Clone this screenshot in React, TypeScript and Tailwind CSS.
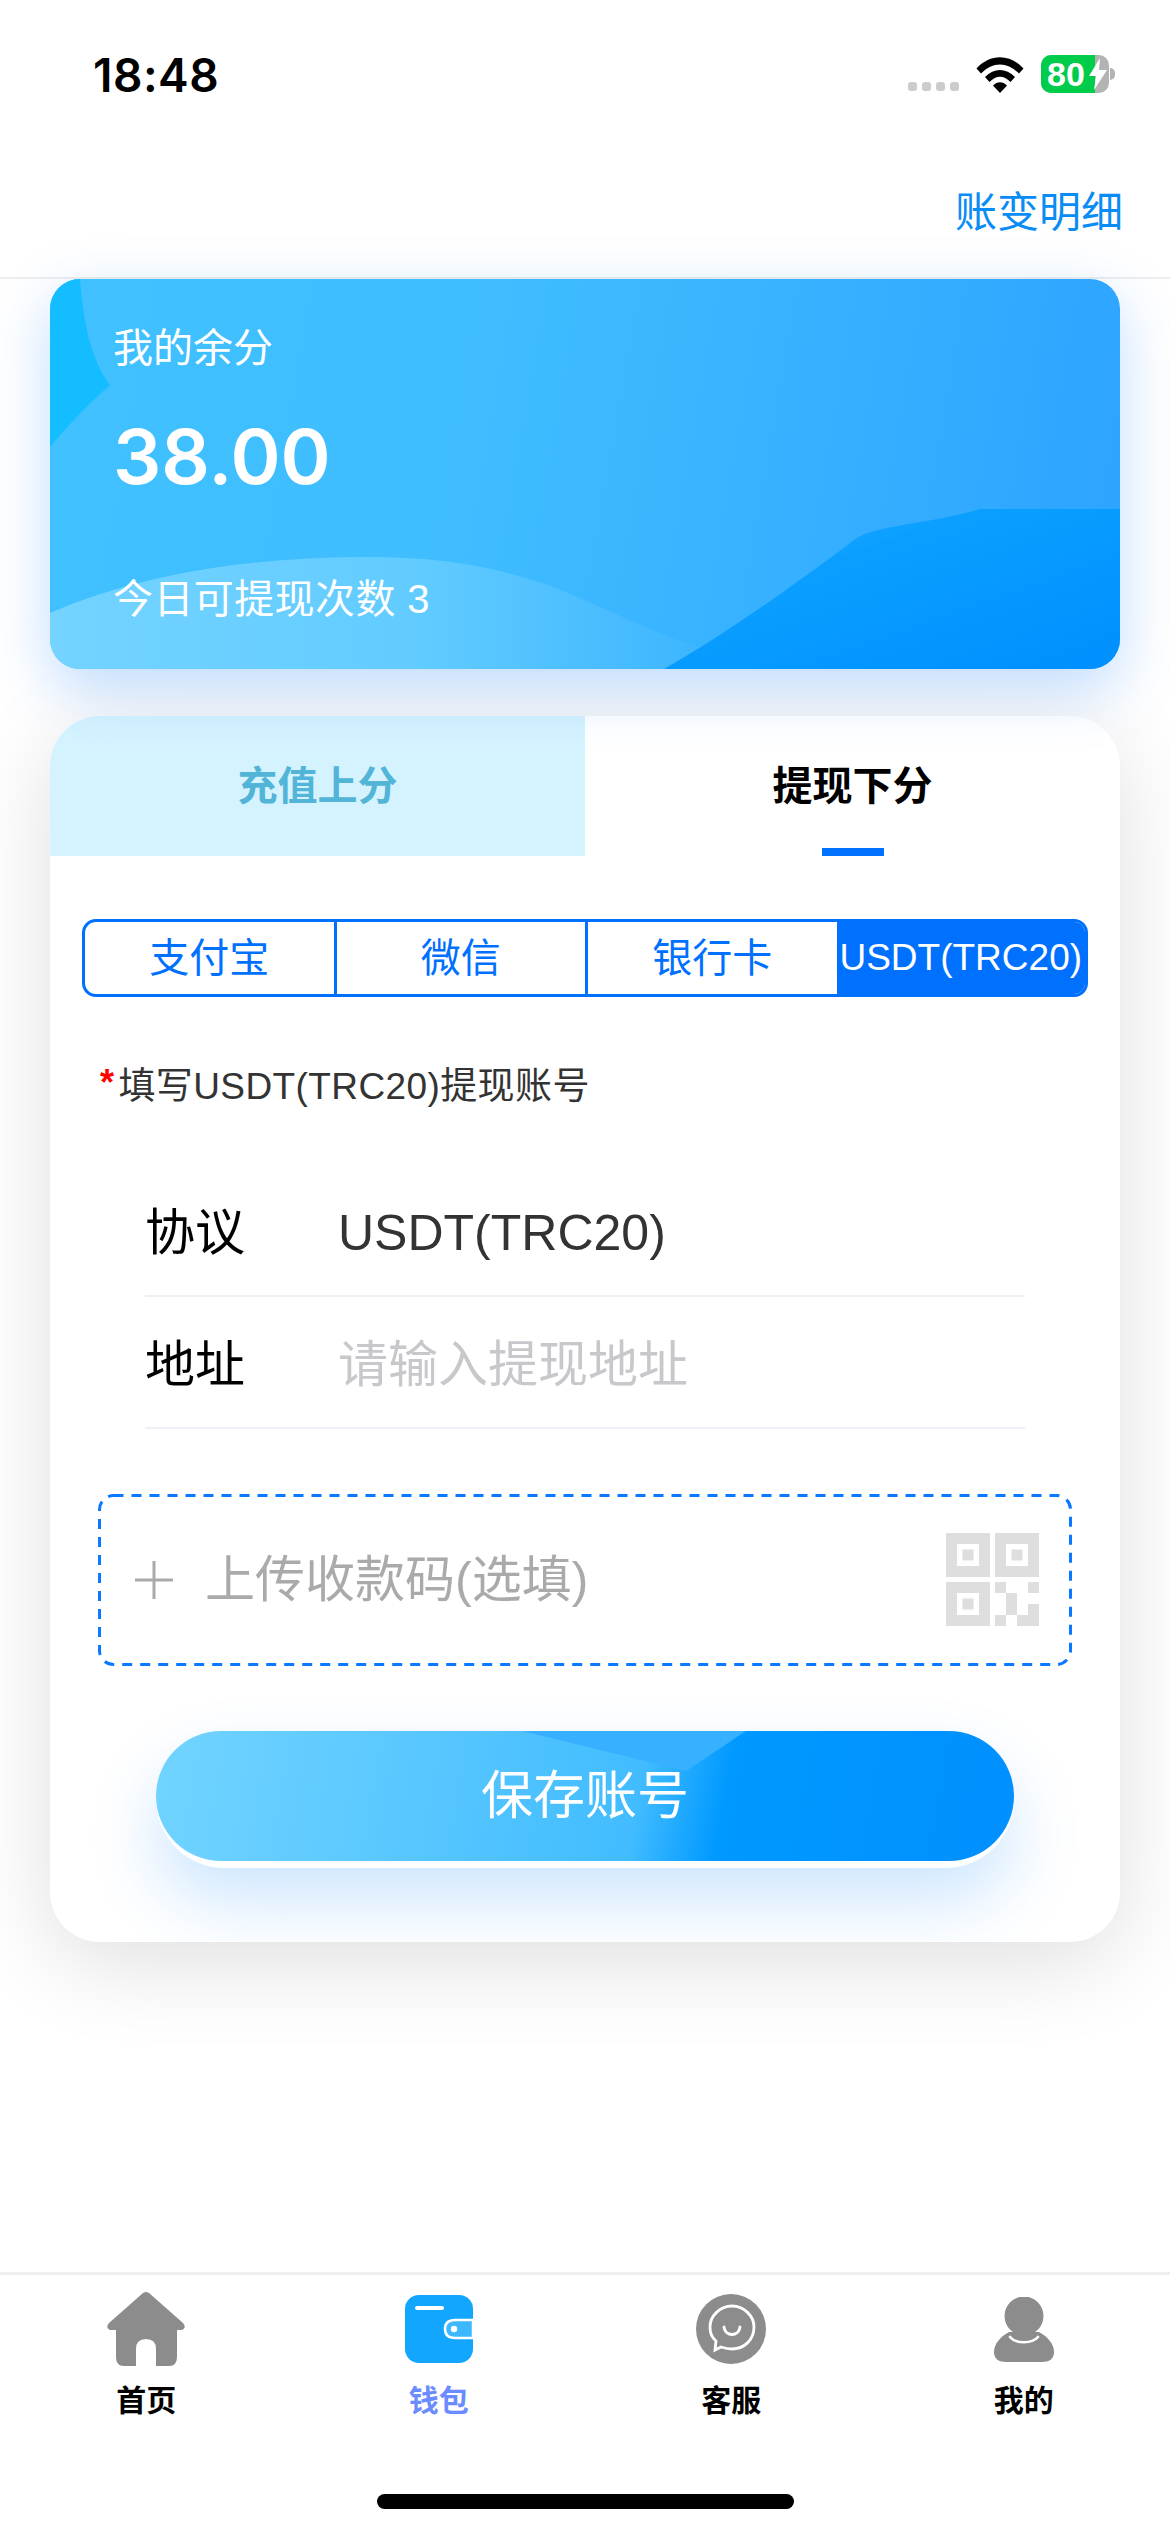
import React from "react";

const Wifi = () => (
  <svg width="48" height="36" viewBox="0 0 48 36" className="block">
    <path d="M0.5 11.5 C14 -3.5 34 -3.5 47.5 11.5 L43 16.5 C31 4.5 17 4.5 5 16.5 Z" fill="#000" />
    <path d="M9 20 C18 10.5 30 10.5 39 20 L34.5 25 C27.5 18 20.5 18 13.5 25 Z" fill="#000" />
    <path d="M17 28.5 C21 24 27 24 31 28.5 L24 36 Z" fill="#000" />
  </svg>
);

const Battery = () => (
  <div className="flex items-center">
    <div className="relative flex h-[38px] w-[68px] overflow-hidden rounded-[10px] bg-[#b3b3b3]">
      <div className="flex w-[54px] items-center bg-[#00cc4c] pl-[6px] text-[34px] leading-none font-bold text-white">80</div>
      <svg width="20" height="32" viewBox="0 0 20 32" className="absolute top-[3px] left-[47px]">
        <path d="M12 0 L1 18 H8 L6 32 L19 12 H11 Z" fill="#fff" />
      </svg>
    </div>
    <div className="ml-[1px] h-[12px] w-[5px] rounded-r-full bg-[#b3b3b3]" />
  </div>
);

const BalanceArt = () => (
  <svg viewBox="0 0 1070 390" preserveAspectRatio="none" className="absolute inset-0 h-full w-full">
    <defs>
      <linearGradient id="balDark" x1="0" y1="0" x2="1" y2="1">
        <stop offset="0" stopColor="#2aaeff" />
        <stop offset="0.35" stopColor="#0a9fff" />
        <stop offset="1" stopColor="#008fff" />
      </linearGradient>
      <linearGradient id="balHill" x1="0" y1="0" x2="1" y2="0">
        <stop offset="0" stopColor="#74d3ff" />
        <stop offset="0.5" stopColor="#62ccff" />
        <stop offset="1" stopColor="#34b0ff" />
      </linearGradient>
    </defs>
    <path d="M0 0 H30 C33 40 40 80 60 106 C35 128 15 150 0 168 Z" fill="#14bdff" />
    <path d="M0 334 C90 295 200 278 316 278 C400 278 450 290 498 306 C560 330 620 365 720 390 H0 Z" fill="url(#balHill)" />
    <path d="M614 390 C650 370 720 325 808 258 C835 245 880 245 930 230 H1070 V390 Z" fill="url(#balDark)" />
  </svg>
);

const ButtonArt = () => (
  <svg viewBox="0 0 858 130" preserveAspectRatio="none" className="absolute inset-0 h-full w-full">
    <path d="M366 0 L530 40 L590 0 Z" fill="#37b1ff" />
  </svg>
);

const Qr = () => (
  <svg width="93" height="94" viewBox="0 0 93 94" className="block" fill="#dedede">
    <path fillRule="evenodd" d="M0 0H44V44H0Z M11 11V33H33V11Z" />
    <rect x="16.5" y="16.5" width="11" height="11" />
    <path fillRule="evenodd" d="M49 0H93V44H49Z M60 11V33H82V11Z" />
    <rect x="65.5" y="16.5" width="11" height="11" />
    <path fillRule="evenodd" d="M0 49H44V93H0Z M11 60V82H33V60Z" />
    <rect x="16.5" y="65.5" width="11" height="11" />
    <rect x="49" y="49" width="11" height="11" />
    <rect x="82" y="49" width="11" height="11" />
    <rect x="60" y="60" width="11" height="22" />
    <rect x="49" y="82" width="11" height="11" />
    <path d="M82 71H93V93H71V82H82Z" />
  </svg>
);

const HomeIcon = () => (
  <svg width="78" height="74" viewBox="0 0 78 74" className="block">
    <path
      fill="#8c8c8c"
      d="M36 1 Q39 -1 42 1 L76 31 Q80 36 75 38 L70 38 V65 Q70 74 62 74 H49 V57 Q49 47 39 47 Q29 47 29 57 V74 H17 Q9 74 9 65 V38 L3 38 Q-2 36 2 31 Z"
    />
  </svg>
);

const WalletIcon = () => (
  <svg width="68" height="68" viewBox="0 0 68 68" className="block">
    <rect width="68" height="68" rx="14" fill="#12a6ff" />
    <rect x="10" y="11" width="29" height="4" rx="2" fill="#fff" />
    <path d="M68 25 H50 Q40 25 40 34 Q40 43 50 43 H68 Z" fill="#3db8ff" stroke="#fff" strokeWidth="2.5" />
    <circle cx="49" cy="34" r="3.2" fill="#fff" />
  </svg>
);

const ServiceIcon = () => (
  <svg width="70" height="70" viewBox="0 0 70 70" className="block">
    <circle cx="35" cy="35" r="35" fill="#8c8c8c" />
    <path
      d="M36 12 C48 12 58 22 58 33 C58 46 48 55 36 55 C32 55 28 54 25 53 L19 56 L20 47 C15 43 14 38 14 33 C14 22 24 12 36 12 Z"
      fill="none"
      stroke="#fff"
      strokeWidth="2.8"
    />
    <path d="M28 33 C29 43 43 43 44 33" fill="none" stroke="#fff" strokeWidth="2.8" strokeLinecap="round" />
  </svg>
);

const MeIcon = () => (
  <svg width="60" height="65" viewBox="0 0 60 65" className="block">
    <circle cx="30" cy="19" r="19.5" fill="#8c8c8c" />
    <path d="M15 35 H45 C54 40 60 47 60 55 C60 62 55 65 48 65 H12 C5 65 0 62 0 55 C0 47 6 40 15 35 Z" fill="#8c8c8c" />
    <path d="M16 40 C22 47 38 47 44 40" fill="none" stroke="#fff" strokeWidth="2.6" strokeLinecap="round" />
  </svg>
);

const NavItem = ({ icon, label, active }: { icon: React.ReactNode; label: string; active?: boolean }) => (
  <div className="flex flex-1 flex-col items-center">
    <div className="flex h-[78px] items-center justify-center">{icon}</div>
    <div className={`mt-[13px] text-[30px] leading-[40px] font-bold ${active ? "text-[#6b8cff]" : "text-black"}`}>{label}</div>
  </div>
);

export default function App() {
  return (
    <div className="flex h-[2532px] w-[1170px] flex-col overflow-hidden bg-white [font-family:'Liberation_Sans','Noto_Sans_CJK_SC',sans-serif]">
      <header className="h-[279px] shrink-0 border-b-[2px] border-[#eeeeee]">
        <div className="flex h-[183px] items-start justify-between pt-[50px] pr-[55px] pl-[93px]">
          <div className="text-[46px] leading-[50px] font-semibold tracking-[0.5px] text-black [font-family:Inter,sans-serif]">18:48</div>
          <div className="flex items-end gap-[17px] pt-[5px]">
            <div className="mb-[2px] flex gap-[5px]">
              {[0, 1, 2, 3].map((i) => (
                <div key={i} className="h-[9px] w-[9px] rounded-[3px] bg-[#cccccc]" />
              ))}
            </div>
            <Wifi />
            <Battery />
          </div>
        </div>
        <div className="flex justify-end pr-[47px] text-[42px] leading-[60px] text-[#0a8cf5]">账变明细</div>
      </header>

      <main className="flex flex-col px-[50px]">
        <section className="relative h-[390px] overflow-hidden rounded-[30px] bg-[linear-gradient(100deg,#41c1ff_0%,#3fbdff_40%,#2da3ff_100%)] shadow-[0_20px_60px_rgba(0,120,255,0.25)]">
          <BalanceArt />
          <div className="relative flex h-full flex-col pl-[63px] text-white">
            <div className="mt-[44px] text-[40px] leading-[50px]">我的余分</div>
            <div className="mt-[38px] text-[76px] leading-[90px] font-semibold [font-family:Inter,sans-serif]">38.00</div>
            <div className="mt-[73px] text-[40px] leading-[50px] tracking-[0.4px]">今日可提现次数 3</div>
          </div>
        </section>

        <section className="mt-[47px] flex h-[1226px] flex-col overflow-hidden rounded-[50px] bg-white shadow-[0_20px_90px_rgba(0,0,0,0.13)]">
          <div className="flex h-[140px] shrink-0">
            <div className="flex flex-1 items-center justify-center bg-[#d5f3ff] text-[40px] font-bold text-[#52b4d6]">充值上分</div>
            <div className="relative flex flex-1 items-center justify-center text-[40px] font-bold text-black">
              提现下分
              <div className="absolute bottom-0 left-[237px] h-[8px] w-[62px] bg-[#0070ff]" />
            </div>
          </div>

          <div className="mx-[32px] mt-[63px] flex h-[78px] overflow-hidden rounded-[14px] border-[3px] border-[#0070ff] text-[40px] text-[#0070ff]">
            <div className="flex flex-1 items-center justify-center border-r-[3px] border-[#0070ff]">支付宝</div>
            <div className="flex flex-1 items-center justify-center border-r-[3px] border-[#0070ff]">微信</div>
            <div className="flex flex-1 items-center justify-center">银行卡</div>
            <div className="flex flex-1 items-center justify-center bg-[#0070ff] text-[37px] whitespace-nowrap text-white">USDT(TRC20)</div>
          </div>

          <div className="mt-[65px] ml-[50px] flex h-[50px] items-center text-[37px] tracking-[0.4px] text-[#333333]">
            <span className="mr-[4px] mb-[8px] text-[36px] leading-none font-bold text-[#ff0000]">*</span>
            <span>填写USDT(TRC20)提现账号</span>
          </div>

          <div className="mx-[95px] mt-[53px] flex flex-col">
            <div className="flex h-[132px] items-center border-b-[2px] border-[#eef0f5] pt-[6px] text-[50px]">
              <span className="w-[193px] text-black">协议</span>
              <span className="text-[#333333]">USDT(TRC20)</span>
            </div>
            <div className="flex h-[132px] items-center border-b-[2px] border-[#eef0f5] pt-[6px] text-[50px]">
              <span className="w-[193px] text-black">地址</span>
              <span className="text-[#c8c8cc]">请输入提现地址</span>
            </div>
          </div>

          <div className="relative mx-[48px] mt-[65px] flex h-[172px] items-center pr-[33px] pl-[37px]">
            <svg className="pointer-events-none absolute inset-0 h-full w-full" fill="none">
              <rect x="1.5" y="1.5" width="971" height="169" rx="14" stroke="#0a78ff" strokeWidth="3" strokeDasharray="10 8" />
            </svg>
            <svg width="38" height="38" viewBox="0 0 38 38" className="shrink-0">
              <path d="M17.5 0h3v17.5H38v3H20.5V38h-3V20.5H0v-3h17.5Z" fill="#aaaaaa" />
            </svg>
            <span className="ml-[32px] flex-1 text-[50px] text-[#aaaaaa]">上传收款码(选填)</span>
            <Qr />
          </div>

          <div className="mx-[106px] mt-[65px] h-[137px] rounded-full bg-white shadow-[0_34px_70px_rgba(0,130,255,0.2)]">
            <div className="relative flex h-[130px] items-center justify-center overflow-hidden rounded-full bg-[linear-gradient(100deg,#72d4ff_0%,#42bcff_56%,#0099ff_66%,#008fff_100%)] text-[52px] text-white">
              <ButtonArt />
              <span className="relative">保存账号</span>
            </div>
          </div>
        </section>
      </main>

      <div className="flex-1" />

      <nav className="h-[260px] shrink-0 border-t-[3px] border-[#eeeeee] pt-[15px]">
        <div className="flex">
          <NavItem icon={<HomeIcon />} label="首页" />
          <NavItem icon={<WalletIcon />} label="钱包" active />
          <NavItem icon={<ServiceIcon />} label="客服" />
          <NavItem icon={<MeIcon />} label="我的" />
        </div>
        <div className="mx-auto mt-[73px] h-[15px] w-[417px] rounded-full bg-black" />
      </nav>
    </div>
  );
}
